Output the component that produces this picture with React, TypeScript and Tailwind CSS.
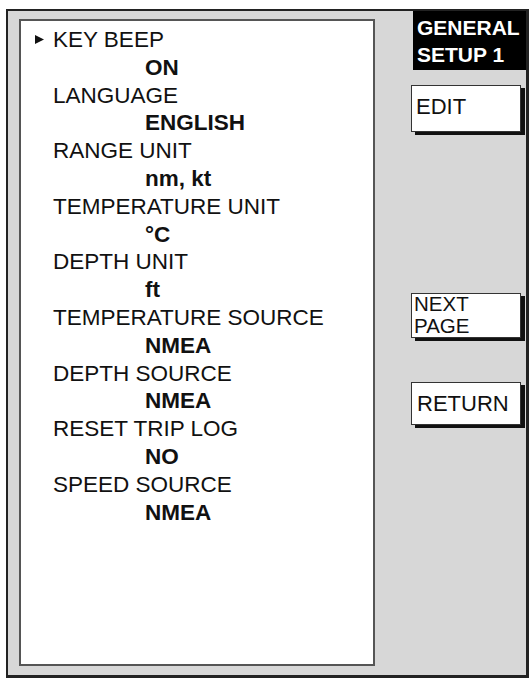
import React from 'react';

type Setting = {
  label: string;
  value: string;
};

const settings: Setting[] = [
  { label: 'KEY BEEP', value: 'ON' },
  { label: 'LANGUAGE', value: 'ENGLISH' },
  { label: 'RANGE UNIT', value: 'nm, kt' },
  { label: 'TEMPERATURE UNIT', value: '°C' },
  { label: 'DEPTH UNIT', value: 'ft' },
  { label: 'TEMPERATURE SOURCE', value: 'NMEA' },
  { label: 'DEPTH SOURCE', value: 'NMEA' },
  { label: 'RESET TRIP LOG', value: 'NO' },
  { label: 'SPEED SOURCE', value: 'NMEA' },
];

const font = { fontFamily: '"Liberation Sans", Arial, Helvetica, sans-serif' };

// soft key on the right-hand strip, white face with a hard drop shadow
const SoftKey: React.FC<{ className?: string; children: React.ReactNode }> = ({ className = '', children }) => (
  <div
    className={`ml-[36px] w-[110px] bg-white border border-[#333] shadow-[4px_3px_0_#111] text-[#111] ${className}`}
  >
    {children}
  </div>
);

export default function App() {
  const selected = 0;

  return (
    <div className="w-[531px] h-[678px] bg-white pl-[6px] pt-[9px]" style={font}>
      <div className="flex w-[523px] h-[669px] bg-[#d7d7d7] border-t-2 border-l-2 border-r-[3px] border-b-[3px] border-[#222]">
        {/* settings list */}
        <div className="ml-[11px] mt-[8px] mb-[9px] w-[356px] bg-white border-2 border-[#555] pt-[5px]">
          {settings.map((s, i) => (
            <div key={s.label} className="text-[22.5px] leading-[27.8px] text-[#111]">
              <div className="flex items-center">
                <div className="w-[32px] flex items-center">
                  {i === selected && (
                    <svg className="ml-[14px]" width="9" height="9" viewBox="0 0 9 9">
                      <polygon points="0,0 9,4.5 0,9" fill="#111" />
                    </svg>
                  )}
                </div>
                <span>{s.label}</span>
              </div>
              <div className="pl-[124px] font-bold">{s.value}</div>
            </div>
          ))}
        </div>

        {/* soft key column */}
        <div className="flex-1 flex flex-col">
          <div className="self-end w-[113px] h-[59px] bg-black text-white font-bold text-[21px] leading-[27px] pl-[4px] pt-[3px]">
            <div>GENERAL</div>
            <div>SETUP 1</div>
          </div>

          <SoftKey className="mt-[15px] h-[47px] pl-[4px] pt-[9px] text-[22px] leading-[24px]">EDIT</SoftKey>

          <SoftKey className="mt-[161px] h-[45px] pl-[2px] text-[20.5px] leading-[22px]">
            <div className="leading-[22px] -mt-px">NEXT</div>
            <div className="leading-[22px]">PAGE</div>
          </SoftKey>

          <SoftKey className="mt-[44px] h-[43px] pl-[5px] pt-[9px] text-[22px] leading-[24px]">RETURN</SoftKey>
        </div>
      </div>
    </div>
  );
}
